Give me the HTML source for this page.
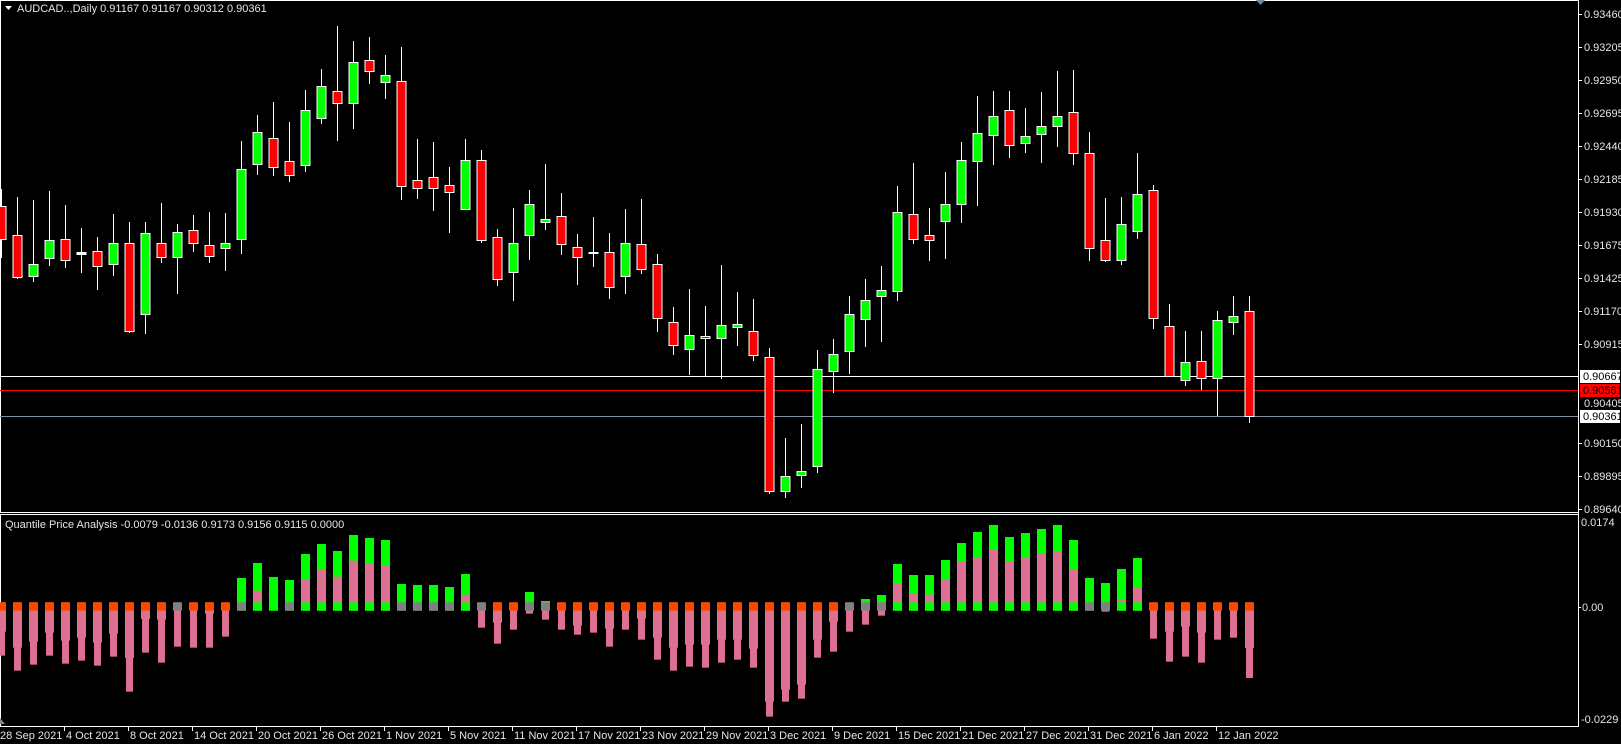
<!DOCTYPE html>
<html><head><meta charset="utf-8"><style>
html,body{margin:0;padding:0;background:#000;width:1621px;height:744px;overflow:hidden}
svg{display:block}
text{font-family:"Liberation Sans",sans-serif;font-size:11px;fill:#e2e6ea}
</style></head><body>
<svg id="s" width="1621" height="744" xmlns="http://www.w3.org/2000/svg">
<rect x="0" y="0" width="1621" height="744" fill="#000"/>
<g id="g"></g>
</svg>
<script>
var NS="http://www.w3.org/2000/svg",g=document.getElementById('g');
function el(t,a,txt){var e=document.createElementNS(NS,t);for(var k in a)e.setAttribute(k,a[k]);if(txt!=null)e.textContent=txt;g.appendChild(e);return e;}
function line(x1,y1,x2,y2,c,w){el('line',{x1:x1,y1:y1,x2:x2,y2:y2,stroke:c,'stroke-width':w||1});}
function txt(x,y,s,fill,anchor){var a={x:x,y:y};if(fill)a.style='fill:'+fill;if(anchor)a['text-anchor']=anchor;el('text',a,s);}
line(0.5,0.5,1578.5,0.5,'#fff');
line(0.5,0,0.5,512,'#fff');
line(0,512.5,1578,512.5,'#fff');
line(0,514.5,1578,514.5,'#fff');
line(0.5,514,0.5,726,'#fff');
line(0,726.5,1578,726.5,'#fff');
line(1578.5,0,1578.5,727,'#fff');
line(0,376.5,1578,376.5,'#fff');
line(0,390.5,1578,390.5,'#f00');
line(0,416.5,1578,416.5,'#8090a0');
var C=[
[206,239,189,258,'r'],[235,277,197,279,'r'],[264,276,200,282,'g'],[240,258,191,266,'g'],[239,260,205,268,'r'],
[252,254,228,273,'d'],[251,266,237,290,'r'],[243,264,214,276,'g'],[243,331,222,333,'r'],[233,314,222,334,'g'],
[243,257,203,263,'r'],[232,257,224,294,'g'],[230,243,215,252,'r'],[245,256,212,263,'r'],[243,248,213,271,'g'],
[169,239,141,254,'g'],[132,164,115,175,'g'],[138,167,102,176,'r'],[161,175,122,182,'r'],[110,165,90,172,'g'],
[86,118,69,124,'g'],[91,103,26,141,'r'],[62,103,41,129,'g'],[60,71,37,84,'r'],[75,82,55,99,'g'],
[81,186,47,200,'r'],[180,188,139,199,'r'],[177,188,142,211,'r'],[185,192,167,233,'r'],[160,209,139,209,'g'],
[160,240,150,243,'r'],[237,279,229,286,'r'],[243,272,208,301,'g'],[204,235,190,260,'g'],[219,222,164,230,'g'],
[216,244,193,255,'r'],[247,257,234,285,'r'],[252,253,217,267,'d'],[252,287,233,299,'r'],[243,276,209,294,'g'],
[244,269,199,274,'r'],[264,318,254,332,'r'],[322,345,307,355,'r'],[335,349,289,375,'g'],[336,338,306,376,'r'],
[325,338,265,379,'g'],[324,327,292,346,'g'],[331,355,299,361,'r'],[357,491,348,494,'r'],[476,491,438,498,'g'],
[471,475,424,488,'g'],[369,466,350,473,'g'],[354,371,339,393,'g'],[314,351,296,374,'g'],[300,319,279,347,'g'],
[290,296,266,342,'g'],[212,291,186,301,'g'],[214,239,163,244,'r'],[235,240,208,261,'r'],[204,221,172,259,'g'],
[160,204,142,223,'g'],[133,161,96,206,'g'],[116,135,91,165,'g'],[110,145,91,158,'r'],[136,143,108,153,'g'],
[126,134,92,163,'g'],[116,126,71,147,'g'],[112,153,70,165,'r'],[153,248,132,261,'r'],[240,260,198,262,'r'],
[224,260,197,265,'g'],[194,231,153,239,'g'],[190,318,185,329,'r'],[326,376,304,376,'r'],[362,380,331,386,'g'],
[361,378,331,390,'r'],[320,378,311,416,'g'],[316,322,296,335,'g'],[311,416,296,423,'r']];
for(var i=0;i<C.length;i++){var c=C[i],x=1+16*i;
 line(x+0.5,c[2],x+0.5,c[3],'#fff');
 var f=c[4]=='r'?'#ff0000':(c[4]=='g'?'#00ff00':'#fff');
 var h=Math.max(c[1]-c[0],1);
 el('rect',{x:x-4,y:c[0]+0.5,width:9,height:h,fill:f,stroke:'#fff','stroke-width':1});
}
var S=[
[410,482,'o'],[458,527,'o'],[440,509,'o'],[413,482,'o'],[437,506,'o'],[428,497,'o'],[443,512,'o'],[416,485,'o'],[489,590,'o'],[372,473,'o'],
[374,503,'o'],[0,455,'y'],[0,458,'o'],[356,458,'o'],[0,425,'o'],[249,0,'y'],[204,287,'g'],[246,0,'g'],[255,0,'y'],[177,255,'g'],
[147,225,'g'],[168,245,'g'],[120,197,'g'],[129,207,'g'],[135,213,'g'],[267,0,'y'],[270,0,'y'],[270,0,'y'],[276,0,'y'],[237,299,'g'],
[0,398,'y'],[383,446,'o'],[0,404,'o'],[291,356,'y'],[318,374,'y'],[0,404,'o'],[392,419,'o'],[0,413,'o'],[401,455,'o'],[0,404,'o'],
[371,434,'o'],[428,494,'o'],[458,527,'o'],[449,515,'o'],[449,518,'o'],[434,503,'o'],[434,494,'o'],[461,518,'o'],[620,665,'o'],[584,620,'o'],
[569,611,'o'],[434,488,'o'],[380,470,'o'],[0,410,'y'],[312,389,'y'],[300,362,'y'],[207,267,'g'],[240,297,'g'],[240,299,'g'],[195,255,'g'],
[144,201,'g'],[111,186,'g'],[90,165,'g'],[126,198,'g'],[114,189,'g'],[102,177,'g'],[90,171,'g'],[135,225,'g'],[249,0,'y'],[264,350,'y'],
[222,315,'g'],[189,279,'g'],[0,431,'o'],[410,500,'o'],[395,485,'o'],[413,503,'o'],[0,434,'o'],[0,428,'o'],[459,549,'o']];
function Y(v){return 495+v/3;}
var zt=Y(322),zb=Y(347);
for(var i=0;i<S.length;i++){var s=S[i],x=1+16*i;
 var gv=s[0],pv=s[1];
 if(gv){ if(gv<322) el('rect',{x:x-4,y:Y(gv),width:9,height:zb-Y(gv),fill:'#00ff00'});
         else el('rect',{x:x-4,y:zt,width:9,height:Y(gv)-zt,fill:'#00ff00'}); }
 if(pv){ if(pv<322) el('rect',{x:x-3,y:Y(pv),width:7,height:zb-Y(pv),fill:'#db7093'});
         else el('rect',{x:x-3,y:zt,width:7,height:Y(pv)-zt,fill:'#db7093'}); }
 var sc=s[2]=='o'?'#ff4500':(s[2]=='y'?'#808080':'#00ff00');
 el('rect',{x:x-4,y:zt,width:9,height:zb-zt,fill:sc});
}
var P=['0.93460','0.93205','0.92950','0.92695','0.92440','0.92185','0.91930','0.91675','0.91425','0.91170','0.90915'];
for(var k=0;k<P.length;k++){var y=14+33*k;line(1578,y+0.5,1582,y+0.5,'#fff');txt(1584,y+4,P[k]);}
var P2=[['0.90150',443],['0.89895',476],['0.89640',509]];
P2.forEach(function(p){line(1578,p[1]+0.5,1582,p[1]+0.5,'#fff');txt(1584,p[1]+4,p[0]);});
txt(1584,407,'0.90405');
el('rect',{x:1580,y:370,width:40,height:13,fill:'#fff'});txt(1583,380,'0.90667','#000');
el('rect',{x:1580,y:384,width:40,height:13,fill:'#ff0000'});txt(1583,394,'0.90561','#000');
el('rect',{x:1580,y:410,width:40,height:13,fill:'#fff'});txt(1583,420,'0.90361','#000');
txt(1581,526,'0.0174');
line(1578,607.5,1581,607.5,'#fff');txt(1582,611,'0.00');
txt(1581,723,'-0.0229');
el('polygon',{points:'5,6 12,6 8.5,10',fill:'#fff'});
txt(17,12,'AUDCAD..,Daily  0.91167 0.91167 0.90312 0.90361');
txt(5,528,'Quantile Price Analysis -0.0079 -0.0136 0.9173 0.9156 0.9115 0.0000');
el('polygon',{points:'1256,0 1265,0 1260.5,5',fill:'#778899'});
el('polygon',{points:'0,718 5,724 0,724',fill:'#778899'});
var D=['28 Sep 2021','4 Oct 2021','8 Oct 2021','14 Oct 2021','20 Oct 2021','26 Oct 2021','1 Nov 2021','5 Nov 2021','11 Nov 2021','17 Nov 2021','23 Nov 2021','29 Nov 2021','3 Dec 2021','9 Dec 2021','15 Dec 2021','21 Dec 2021','27 Dec 2021','31 Dec 2021','6 Jan 2022','12 Jan 2022'];
for(var k=0;k<D.length;k++){var x=64*k;if(k>0)line(x+0.5,727,x+0.5,731,'#fff');txt(k==0?0:x+2,739,D[k]);}
</script>
</body></html>
